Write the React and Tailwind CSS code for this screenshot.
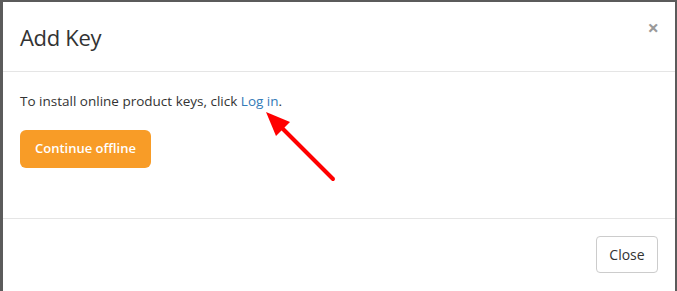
export default function App() {
  return (
    <div className="w-[677px] h-[291px] bg-[#5b5b5b] pl-[3px] pt-[2px] pr-[2px] overflow-hidden" style={{ fontFamily: '"Open Sans", "Noto Sans", sans-serif' }}>
      <div className="relative bg-white h-full flex flex-col">
        {/* header */}
        <div className="h-[70px] flex items-center justify-between pl-[17px] pr-[16px] border-b border-[#e5e5e5]">
          <h4 className="text-[22px] text-[#333] leading-none tracking-[-0.3px]">Add Key</h4>
          <button className="text-[20px] leading-none font-bold text-[#9a9a9a] -mt-[18px]">×</button>
        </div>

        {/* body */}
        <div className="h-[147px] pl-[17px] pt-[19px] border-b border-[#e5e5e5]">
          <p className="text-[13.5px] text-[#333] leading-[20px]">
            To install online product keys, click <a className="text-[#337ab7]">Log in</a>.
          </p>
          <button className="mt-[19px] h-[38px] w-[131px] rounded-[6px] bg-[#f89c27] text-white text-[13px] font-semibold">
            Continue offline
          </button>
        </div>

        {/* footer */}
        <div className="flex-1 flex justify-end items-start pt-[17px] pr-[17px]">
          <button className="h-[37px] w-[62px] rounded-[4px] border border-[#ccc] bg-white text-[14px] text-[#333]">
            Close
          </button>
        </div>

        {/* annotation arrow */}
        <svg className="absolute left-0 top-0 pointer-events-none" width="672" height="289">
          <line x1="330" y1="177" x2="276" y2="123" stroke="#ff0000" strokeWidth="4" strokeLinecap="round" />
          <polygon points="263,110 287,120 273,134" fill="#ff0000" />
        </svg>
      </div>
    </div>
  )
}
